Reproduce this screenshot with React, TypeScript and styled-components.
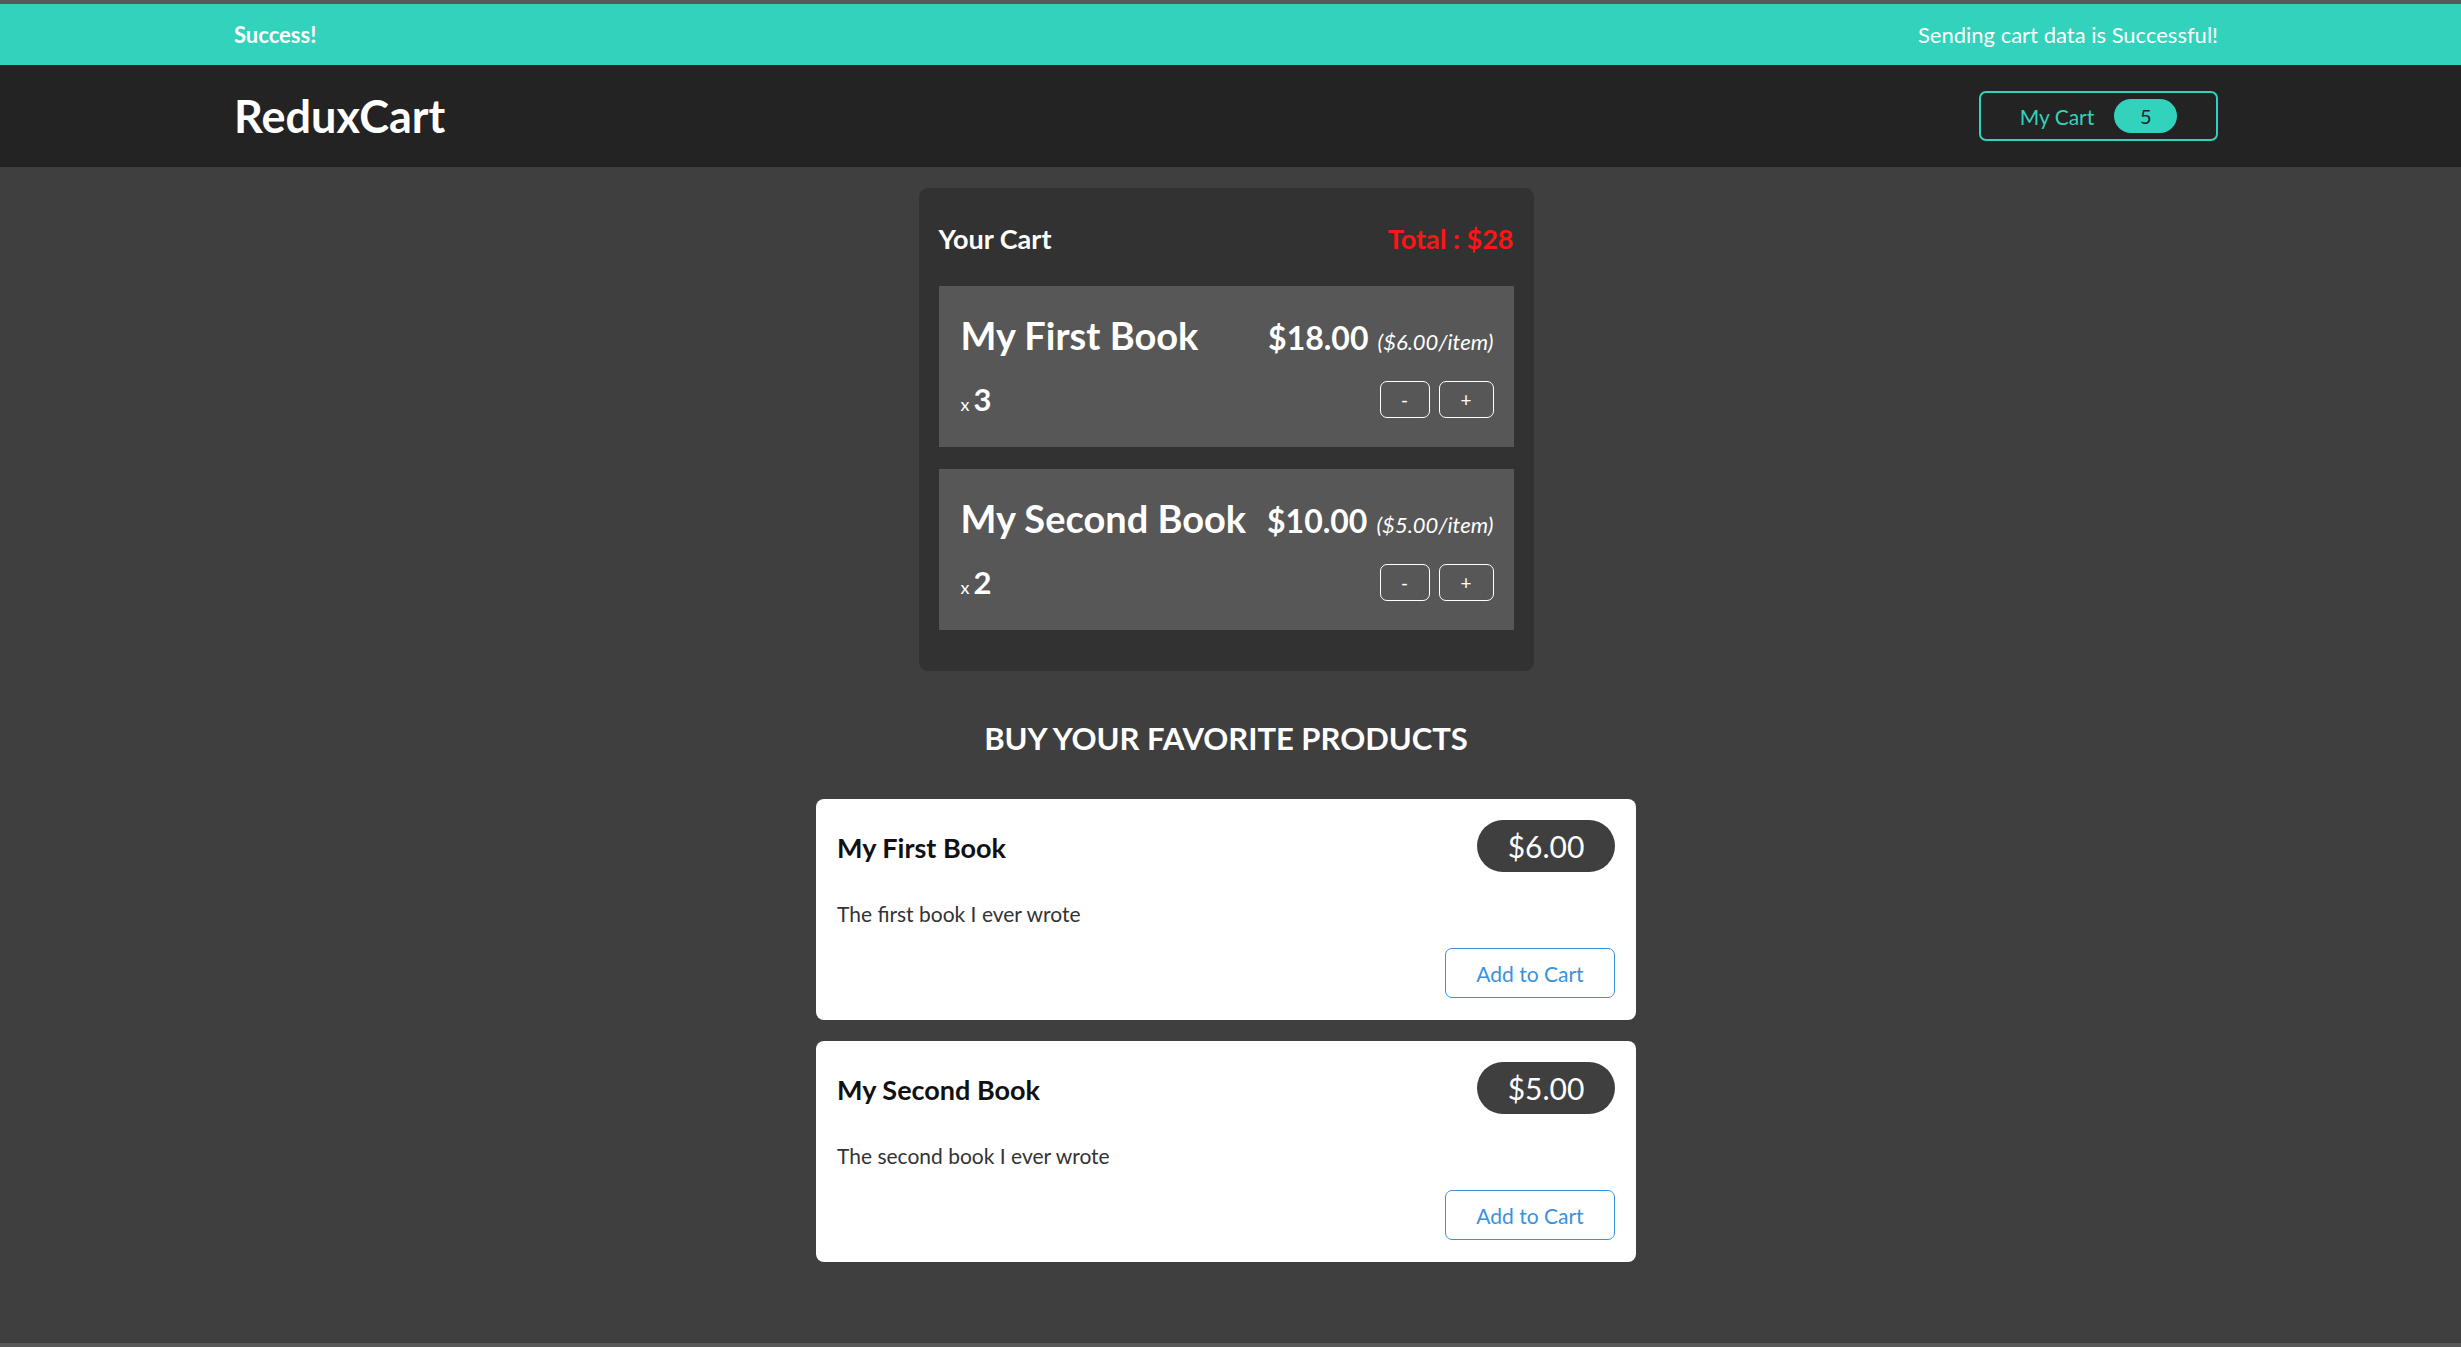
import React from 'react'
import styled, { createGlobalStyle } from 'styled-components'

const font = `Lato, 'Open Sans', sans-serif`

const GlobalStyle = createGlobalStyle`
  * { box-sizing: border-box; }
  html, body { margin: 0; padding: 0; }
  body {
    background: #3f3f3f;
    font-family: ${font};
  }
`

const Page = styled.div`
  min-height: 100vh;
  border-top: 4px solid #595959;
  border-bottom: 4px solid #595959;
  background: #3f3f3f;
  display: flex;
  flex-direction: column;
`

const Notification = styled.div`
  height: 61px;
  background: #32d2bc;
  display: flex;
  justify-content: space-between;
  align-items: center;
  padding: 0 243px 0 234px;
  color: #fff;
  font-size: 22px;
`

const NoteTitle = styled.h2`
  margin: 0;
  font-size: 22px;
  font-weight: 700;
`

const NoteText = styled.p`
  margin: 0;
`

const Header = styled.header`
  height: 102px;
  background: #232323;
  display: flex;
  justify-content: space-between;
  align-items: center;
  padding: 0 243px 0 234px;
`

const Logo = styled.h1`
  margin: 0;
  color: #fff;
  font-size: 45px;
  font-weight: 700;
`

const CartButton = styled.button`
  width: 239px;
  height: 50px;
  display: flex;
  align-items: center;
  justify-content: center;
  gap: 20px;
  background: transparent;
  border: 2px solid #32d2bc;
  border-radius: 7px;
  color: #32d2bc;
  font-family: ${font};
  font-size: 21px;
  cursor: pointer;
`

const Badge = styled.span`
  width: 63px;
  height: 34px;
  border-radius: 17px;
  background: #32d2bc;
  color: #232323;
  display: flex;
  align-items: center;
  justify-content: center;
  font-size: 20px;
`

const Main = styled.main`
  display: flex;
  flex-direction: column;
  align-items: center;
  padding: 21px 9px 60px 0;
`

const CartPanel = styled.section`
  width: 615px;
  background: #323232;
  border-radius: 9px;
  padding: 28px 20px 41px;
  color: #fff;
`

const CartHead = styled.div`
  display: flex;
  justify-content: space-between;
  align-items: center;
  height: 45px;
  margin-bottom: 25px;
`

const CartTitle = styled.h2`
  margin: 0;
  font-size: 27px;
  font-weight: 700;
`

const Total = styled.span`
  color: #ff1414;
  font-size: 27px;
  font-weight: 700;
`

const ItemList = styled.ul`
  list-style: none;
  margin: 0;
  padding: 0;
  display: flex;
  flex-direction: column;
  gap: 22px;
`

const Item = styled.li`
  height: 161px;
  background: #575757;
  padding: 26px 20px 0 22px;
`

const ItemTop = styled.div`
  display: flex;
  justify-content: space-between;
  align-items: baseline;
  gap: 14px;
`

const ItemName = styled.h3`
  margin: 0;
  font-size: 38px;
  font-weight: 700;
  white-space: nowrap;
`

const PriceGroup = styled.div`
  display: flex;
  align-items: baseline;
  gap: 9px;
  white-space: nowrap;
`

const Price = styled.span`
  font-size: 32px;
  font-weight: 700;
`

const PerItem = styled.span`
  font-size: 22px;
  font-style: italic;
`

const ItemBottom = styled.div`
  display: flex;
  justify-content: space-between;
  align-items: center;
  margin-top: 22px;
`

const Qty = styled.div`
  display: flex;
  align-items: baseline;
  gap: 4px;
  font-size: 18px;
`

const QtyNum = styled.span`
  font-size: 31px;
  font-weight: 700;
`

const Actions = styled.div`
  display: flex;
  gap: 9px;
`

const SmallButton = styled.button<{ $wide?: boolean }>`
  width: ${(p) => (p.$wide ? '55px' : '50px')};
  height: 37px;
  background: transparent;
  border: 1.5px solid #fff;
  border-radius: 7px;
  color: #fff;
  font-family: ${font};
  font-size: 19px;
  cursor: pointer;
`

const ProductsTitle = styled.h2`
  margin: 48px 0 42px;
  color: #fff;
  font-size: 31px;
  font-weight: 700;
  text-transform: uppercase;
`

const ProductList = styled.ul`
  list-style: none;
  margin: 0;
  padding: 0;
  display: flex;
  flex-direction: column;
  gap: 21px;
`

const Card = styled.li`
  width: 820px;
  height: 221px;
  background: #fff;
  border-radius: 8px;
  padding: 21px 21px 22px;
  display: flex;
  flex-direction: column;
`

const CardTop = styled.div`
  display: flex;
  justify-content: space-between;
  align-items: center;
`

const CardName = styled.h3`
  margin: 3px 0 0;
  font-size: 27px;
  font-weight: 700;
  color: #111;
`

const PricePill = styled.div`
  width: 138px;
  height: 52px;
  border-radius: 26px;
  background: #3f3f3f;
  color: #fff;
  font-size: 30px;
  display: flex;
  align-items: center;
  justify-content: center;
`

const Description = styled.p`
  margin: 29px 0 0;
  font-size: 21px;
  color: #333;
`

const CardActions = styled.div`
  display: flex;
  justify-content: flex-end;
  margin-top: auto;
`

const AddButton = styled.button`
  width: 170px;
  height: 50px;
  background: #fff;
  border: 1.5px solid #3a92dc;
  border-radius: 7px;
  color: #3a92dc;
  font-family: ${font};
  font-size: 21px;
  cursor: pointer;
`

const cartItems = [
  { id: 'p1', title: 'My First Book', quantity: 3, price: 6 },
  { id: 'p2', title: 'My Second Book', quantity: 2, price: 5 }
]

const products = [
  { id: 'p1', title: 'My First Book', price: 6, description: 'The first book I ever wrote' },
  { id: 'p2', title: 'My Second Book', price: 5, description: 'The second book I ever wrote' }
]

const App = () => {
  const total = cartItems.reduce((sum, item) => sum + item.price * item.quantity, 0)
  const count = cartItems.reduce((sum, item) => sum + item.quantity, 0)

  return (
    <Page>
      <GlobalStyle />
      <Notification>
        <NoteTitle>Success!</NoteTitle>
        <NoteText>Sending cart data is Successful!</NoteText>
      </Notification>
      <Header>
        <Logo>ReduxCart</Logo>
        <CartButton>
          <span>My Cart</span>
          <Badge>{count}</Badge>
        </CartButton>
      </Header>
      <Main>
        <CartPanel>
          <CartHead>
            <CartTitle>Your Cart</CartTitle>
            <Total>Total : ${total}</Total>
          </CartHead>
          <ItemList>
            {cartItems.map((item) => (
              <Item key={item.id}>
                <ItemTop>
                  <ItemName>{item.title}</ItemName>
                  <PriceGroup>
                    <Price>${(item.price * item.quantity).toFixed(2)}</Price>
                    <PerItem>(${item.price.toFixed(2)}/item)</PerItem>
                  </PriceGroup>
                </ItemTop>
                <ItemBottom>
                  <Qty>
                    x <QtyNum>{item.quantity}</QtyNum>
                  </Qty>
                  <Actions>
                    <SmallButton>-</SmallButton>
                    <SmallButton $wide>+</SmallButton>
                  </Actions>
                </ItemBottom>
              </Item>
            ))}
          </ItemList>
        </CartPanel>
        <ProductsTitle>Buy your favorite products</ProductsTitle>
        <ProductList>
          {products.map((product) => (
            <Card key={product.id}>
              <CardTop>
                <CardName>{product.title}</CardName>
                <PricePill>${product.price.toFixed(2)}</PricePill>
              </CardTop>
              <Description>{product.description}</Description>
              <CardActions>
                <AddButton>Add to Cart</AddButton>
              </CardActions>
            </Card>
          ))}
        </ProductList>
      </Main>
    </Page>
  )
}

export default App
